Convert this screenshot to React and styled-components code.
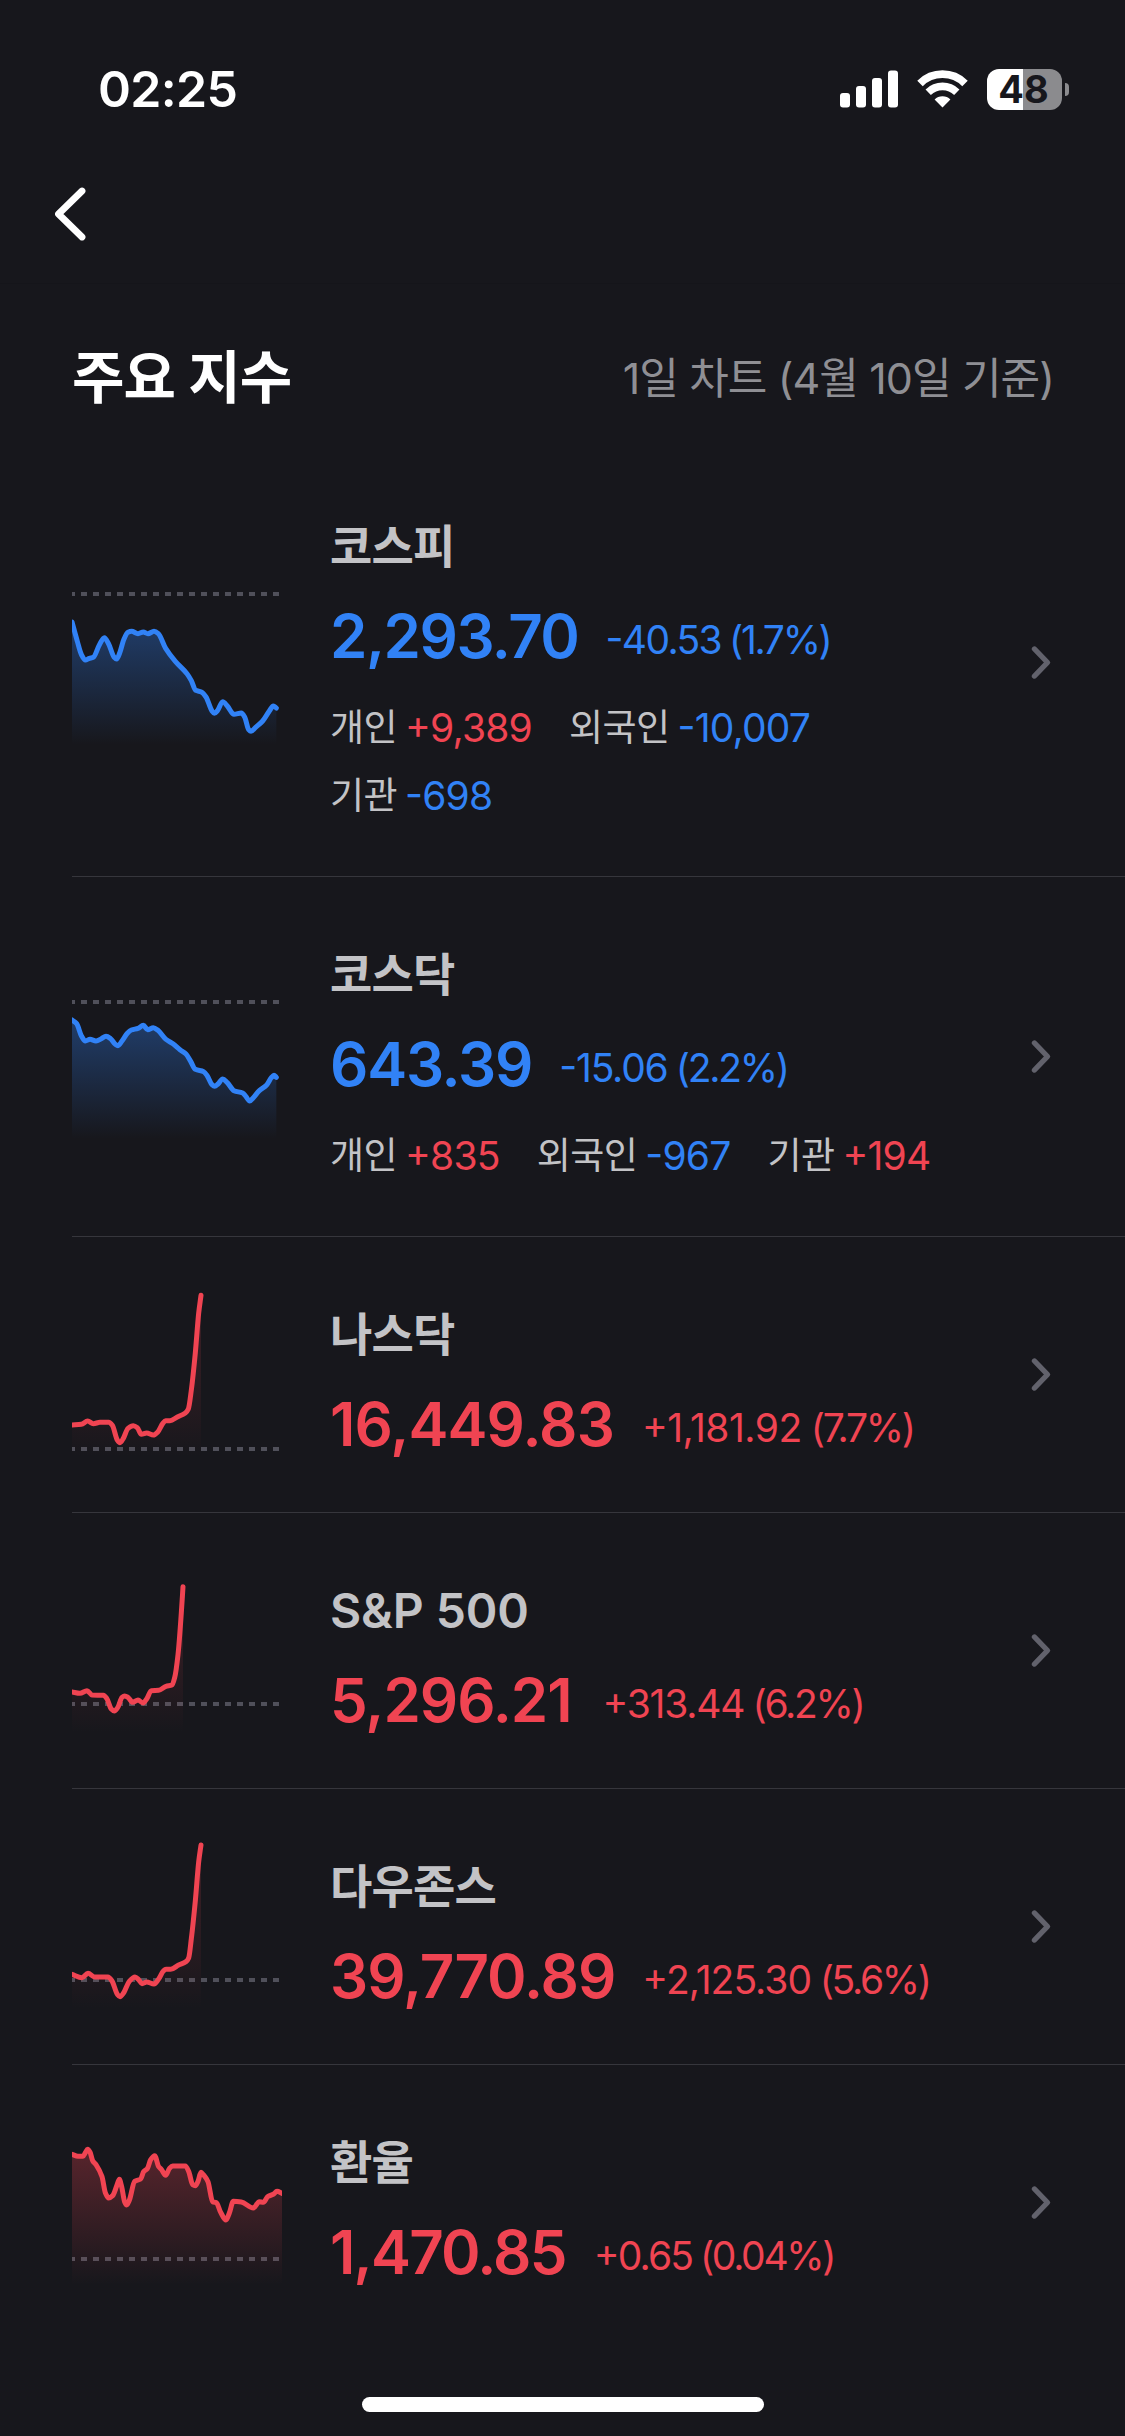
import React from 'react';
import styled, { createGlobalStyle } from 'styled-components';

const GlobalStyle = createGlobalStyle`
  * {
    box-sizing: border-box;
  }

  body {
    margin: 0;
    background: #17171c;
    font-family: Inter, 'Noto Sans CJK KR', sans-serif;
    -webkit-font-smoothing: antialiased;
  }
`;

/* Colors */
const BLUE = '#3182f6';
const RED = '#f04452';

const trend = (value) => (value.startsWith('-') ? BLUE : RED);

/* Data */
/* Chart points live on a 630 x 510 grid, base is the y of the previous close */
const indices = [
  {
    name: '코스피',
    price: '2,293.70',
    priceTracking: -1.47,
    change: '-40.53',
    rate: '(1.7%)',
    changeTracking: -1.6,
    color: BLUE,
    investors: [['개인', '+9,389'], ['외국인', '-10,007'], ['기관', '-698']],
    base: 48,
    fillOpacity: 0.36,
    points: [[0, 132], [16, 190], [28, 229], [40, 246], [52, 241], [64, 238], [82, 201], [97, 179], [110, 198], [126, 237], [134, 243], [143, 225], [156, 183], [168, 163], [179, 160], [198, 167], [214, 162], [228, 167], [246, 160], [259, 167], [281, 211], [310, 250], [345, 287], [358, 308], [371, 337], [388, 342], [402, 357], [420, 399], [427, 406], [437, 397], [452, 371], [466, 384], [486, 409], [508, 405], [518, 417], [530, 455], [537, 460], [550, 449], [572, 429], [592, 399], [604, 384], [613, 390]],
  },
  {
    name: '코스닥',
    price: '643.39',
    priceTracking: -1.2,
    change: '-15.06',
    rate: '(2.2%)',
    changeTracking: -1.2,
    color: BLUE,
    investors: [['개인', '+835'], ['외국인', '-967'], ['기관', '+194']],
    base: 90,
    fillOpacity: 0.36,
    points: [[0, 144], [14, 155], [28, 191], [40, 207], [54, 202], [72, 207], [88, 200], [102, 193], [116, 200], [130, 217], [138, 221], [150, 207], [166, 184], [178, 174], [198, 169], [214, 160], [227, 173], [244, 167], [258, 175], [282, 202], [304, 216], [324, 233], [342, 246], [356, 268], [370, 292], [395, 299], [406, 312], [420, 338], [428, 343], [438, 336], [452, 321], [466, 332], [486, 356], [512, 363], [522, 374], [533, 387], [544, 377], [562, 356], [584, 339], [598, 317], [606, 310], [613, 316]],
  },
  {
    name: '나스닥',
    price: '16,449.83',
    priceTracking: -0.87,
    change: '+1,181.92',
    rate: '(7.7%)',
    changeTracking: -0.5,
    gap: 28,
    color: RED,
    base: 477,
    fillOpacity: 0.2,
    points: [[0, 405], [28, 403], [47, 393], [64, 401], [84, 397], [110, 397], [121, 406], [136, 450], [144, 458], [154, 445], [168, 415], [184, 407], [196, 413], [208, 433], [224, 429], [244, 435], [258, 425], [272, 401], [281, 392], [294, 392], [316, 381], [340, 369], [349, 357], [358, 300], [370, 188], [380, 70], [387, 16]],
  },
  {
    name: 'S&P 500',
    latin: true,
    price: '5,296.21',
    priceTracking: -1,
    change: '+313.44',
    rate: '(6.2%)',
    changeTracking: -1.2,
    gap: 31,
    color: RED,
    base: 414,
    fillOpacity: 0.2,
    points: [[0, 378], [24, 382], [45, 374], [60, 387], [94, 388], [104, 397], [118, 429], [127, 435], [137, 425], [150, 394], [158, 390], [168, 394], [182, 409], [198, 402], [213, 411], [224, 399], [238, 374], [260, 373], [282, 361], [300, 357], [308, 335], [318, 266], [328, 140], [333, 62]],
  },
  {
    name: '다우존스',
    price: '39,770.89',
    priceTracking: -1,
    change: '+2,125.30',
    rate: '(5.6%)',
    changeTracking: -0.95,
    color: RED,
    base: 414,
    fillOpacity: 0.2,
    points: [[0, 397], [30, 407], [48, 394], [68, 405], [108, 405], [120, 417], [136, 457], [144, 464], [154, 454], [172, 418], [189, 405], [200, 413], [210, 425], [224, 420], [246, 426], [260, 411], [274, 387], [282, 382], [296, 382], [320, 369], [342, 359], [350, 348], [358, 290], [370, 176], [380, 60], [387, 9]],
  },
  {
    name: '환율',
    price: '1,470.85',
    priceTracking: -1.75,
    change: '+0.65',
    rate: '(0.04%)',
    changeTracking: -1.8,
    gap: 28,
    color: RED,
    base: 423,
    fillOpacity: 0.3,
    points: [[0, 109], [18, 115], [33, 115], [40, 104], [47, 94], [54, 102], [62, 128], [72, 140], [90, 176], [100, 224], [110, 240], [122, 233], [134, 204], [142, 184], [149, 206], [158, 252], [164, 261], [172, 247], [188, 190], [206, 183], [215, 161], [226, 152], [236, 125], [248, 113], [260, 146], [268, 154], [281, 172], [292, 152], [302, 144], [340, 144], [350, 160], [362, 200], [370, 203], [378, 190], [387, 163], [394, 170], [408, 191], [422, 252], [433, 254], [446, 283], [462, 306], [472, 285], [484, 250], [508, 252], [544, 270], [562, 251], [574, 253], [588, 235], [604, 229], [615, 220], [630, 226]],
  },
];

/* Page */
const Screen = styled.main`
  display: flex;
  flex-direction: column;
  width: 1125px;
  height: 2436px;
  overflow: hidden;
  background: #17171c;
  color: #fff;
`;

/* Status bar */
const StatusBar = styled.header`
  display: flex;
  align-items: center;
  justify-content: space-between;
  height: 178px;
  padding: 0 56px 0 98px;
`;

const Clock = styled.time`
  font-size: 50px;
  font-weight: 600;
  line-height: 60px;
  letter-spacing: -0.7px;
`;

const StatusIcons = styled.div`
  display: flex;
  align-items: center;
`;

const WifiIcon = styled.svg`
  margin: 0 19px;
`;

const Battery = styled.div`
  display: flex;
  align-items: center;
  gap: 3px;
`;

const BatteryBody = styled.div`
  display: flex;
  align-items: center;
  justify-content: center;
  width: 75px;
  height: 41px;
  padding-right: 2px;
  border-radius: 12px;
  background: linear-gradient(90deg, #fff 48%, #8b8b8e 48%);
  color: #17171c;
  font-size: 38px;
  font-weight: 700;
  line-height: 41px;
`;

const BatteryTip = styled.div`
  width: 4px;
  height: 13px;
  border-radius: 0 4px 4px 0;
  background: #8b8b8e;
`;

/* Navigation */
const NavBar = styled.nav`
  display: flex;
  align-items: center;
  height: 106px;
  padding: 0 0 34px 53px;
  border-bottom: 1px solid #15151a;
`;

const TitleBar = styled.div`
  display: flex;
  align-items: center;
  justify-content: space-between;
  height: 165px;
  padding: 23px 71px 0 72px;
`;

const Title = styled.h1`
  margin: 0;
  font-size: 57px;
  font-weight: 600;
  line-height: 80px;
  letter-spacing: -1px;
`;

const BaseDate = styled.span`
  color: #8f8f94;
  font-size: 43px;
  line-height: 60px;
  letter-spacing: -0.9px;
`;

/* Index list */
const List = styled.ul`
  margin: 0;
  padding: 0;
  list-style: none;
`;

const Row = styled.li`
  display: flex;
  align-items: center;
  margin-left: 72px;
  padding-right: 72px;
  border-bottom: 1px solid ${(props) => (props.$last ? 'transparent' : '#36363c')};
`;

const ChartBox = styled.svg`
  flex: none;
  width: 210px;
  height: 170px;
  margin-right: 48px;
`;

const Info = styled.div`
  width: 630px;
  padding: 62px 0 40px;
`;

const Name = styled.h2`
  margin: 0;
  color: #c3c3c6;
  font-size: ${(props) => (props.$latin ? 48 : 46)}px;
  font-weight: 600;
  line-height: ${(props) => (props.$latin ? 72 : 70)}px;
  letter-spacing: ${(props) => (props.$latin ? -0.1 : -0.8)}px;
`;

const Quote = styled.div`
  display: flex;
  align-items: center;
  gap: ${(props) => props.$gap || 27}px;
  height: 96px;
  margin-top: ${(props) => (props.$latin ? 5 : 7)}px;
  color: ${(props) => props.$color};
  white-space: nowrap;
`;

const Price = styled.strong`
  font-size: 60px;
  font-weight: 600;
  letter-spacing: ${(props) => props.$tracking}px;
`;

const Change = styled.span`
  padding-top: 7px;
  font-size: 39px;
  word-spacing: -1.5px;
  letter-spacing: ${(props) => props.$tracking}px;
`;

/* Signs sit at the middle of the digits */
const Amount = styled.span`
  font-feature-settings: 'case';
`;

const Rate = styled.span`
  letter-spacing: -2.3px;
`;

const Investors = styled.dl`
  display: flex;
  flex-wrap: wrap;
  column-gap: 37px;
  margin: 10px 0 6px;
`;

const Investor = styled.div`
  display: flex;
  gap: 8px;
  line-height: 68px;
`;

const InvestorName = styled.dt`
  color: #c3c3c6;
  font-size: 37px;
  letter-spacing: -0.5px;
`;

const InvestorValue = styled.dd`
  margin: 0;
  color: ${(props) => props.$color};
  font-size: 39px;
  font-feature-settings: 'case';
  letter-spacing: -0.8px;
`;

const Arrow = styled.svg`
  flex: none;
  margin-left: auto;
`;

const HomeIndicator = styled.div`
  width: 402px;
  height: 15px;
  margin: auto auto 24px;
  border-radius: 8px;
  background: #fff;
`;

/* Monotone cubic path, so peaks stay flat and never overshoot */
function linePath(points) {
  const n = points.length;
  const slopes = [];
  for (let i = 0; i < n - 1; i++) {
    slopes.push((points[i + 1][1] - points[i][1]) / (points[i + 1][0] - points[i][0]));
  }
  const tangents = points.map((_, i) => {
    if (i === 0) return slopes[0];
    if (i === n - 1) return slopes[n - 2];
    const a = slopes[i - 1];
    const b = slopes[i];
    return a * b <= 0 ? 0 : (2 * a * b) / (a + b);
  });
  let d = `M${points[0][0]} ${points[0][1]}`;
  for (let i = 0; i < n - 1; i++) {
    const [x0, y0] = points[i];
    const [x1, y1] = points[i + 1];
    const h = (x1 - x0) / 3;
    d += ` C${x0 + h} ${y0 + h * tangents[i]} ${x1 - h} ${y1 - h * tangents[i + 1]} ${x1} ${y1}`;
  }
  return d;
}

function Chart({ id, points, base, color, fillOpacity }) {
  const line = linePath(points);
  const top = Math.min(...points.map((p) => p[1]));
  return (
    <ChartBox viewBox="0 0 630 510">
      <defs>
        <linearGradient id={id} gradientUnits="userSpaceOnUse" x1="0" x2="0" y1={top} y2="500">
          <stop offset="0" stopColor={color} stopOpacity={fillOpacity} />
          <stop offset="1" stopColor={color} stopOpacity="0" />
        </linearGradient>
      </defs>
      <line x1="-9" x2="630" y1={base} y2={base} stroke="#50505a" strokeWidth="12" strokeDasharray="18 18" />
      <path d={`${line} V500 H0 Z`} fill={`url(#${id})`} />
      <path d={line} fill="none" stroke={color} strokeWidth="15" strokeLinecap="round" strokeLinejoin="round" />
    </ChartBox>
  );
}

function IndexRow({ item, id, last }) {
  return (
    <Row $last={last}>
      <Chart id={id} points={item.points} base={item.base} color={item.color} fillOpacity={item.fillOpacity} />
      <Info>
        <Name $latin={item.latin}>{item.name}</Name>
        <Quote $color={item.color} $gap={item.gap} $latin={item.latin}>
          <Price $tracking={item.priceTracking}>{item.price}</Price>
          <Change $tracking={item.changeTracking}>
            <Amount>{item.change}</Amount> <Rate>{item.rate}</Rate>
          </Change>
        </Quote>
        {item.investors && (
          <Investors>
            {item.investors.map(([who, value]) => (
              <Investor key={who}>
                <InvestorName>{who}</InvestorName>
                <InvestorValue $color={trend(value)}>{value}</InvestorValue>
              </Investor>
            ))}
          </Investors>
        )}
      </Info>
      <Arrow width="24" height="36" viewBox="0 0 24 36">
        <path d="M5.5 4 L18.5 17.5 L5.5 31" fill="none" stroke="#62626c" strokeWidth="5.4" strokeLinecap="round" strokeLinejoin="round" />
      </Arrow>
    </Row>
  );
}

function App() {
  return (
    <Screen>
      <GlobalStyle />
      <StatusBar>
        <Clock>02:25</Clock>
        <StatusIcons>
          <svg width="58" height="38" viewBox="0 0 58 38" fill="#fff">
            <rect x="0" y="23" width="10" height="14.5" rx="3" />
            <rect x="16" y="16" width="10" height="21.5" rx="3" />
            <rect x="32" y="8" width="10" height="29.5" rx="3" />
            <rect x="48" y="0.5" width="10" height="37" rx="3" />
          </svg>
          <WifiIcon width="51" height="38" viewBox="0 0 51 38" fill="none" stroke="#fff">
            <path d="M3 13.4 A32 32 0 0 1 48 13.4" strokeWidth="7.8" />
            <path d="M11.2 22.2 A20.5 20.5 0 0 1 39.8 22.2" strokeWidth="7.6" />
            <path d="M25.5 37.5 L17.6 29.6 A11.2 11.2 0 0 1 33.4 29.6 Z" fill="#fff" stroke="none" />
          </WifiIcon>
          <Battery>
            <BatteryBody>48</BatteryBody>
            <BatteryTip />
          </Battery>
        </StatusIcons>
      </StatusBar>
      <NavBar>
        <svg width="34" height="54" viewBox="0 0 34 54">
          <path d="M29 4 L5.5 27 L29 50" fill="none" stroke="#fff" strokeWidth="6.8" strokeLinecap="round" strokeLinejoin="round" />
        </svg>
      </NavBar>
      <TitleBar>
        <Title>주요 지수</Title>
        <BaseDate>1일 차트 (4월 10일 기준)</BaseDate>
      </TitleBar>
      <List>
        {indices.map((item, i) => (
          <IndexRow key={item.name} item={item} id={`fill-${i}`} last={i === indices.length - 1} />
        ))}
      </List>
      <HomeIndicator />
    </Screen>
  );
}

export default App;
